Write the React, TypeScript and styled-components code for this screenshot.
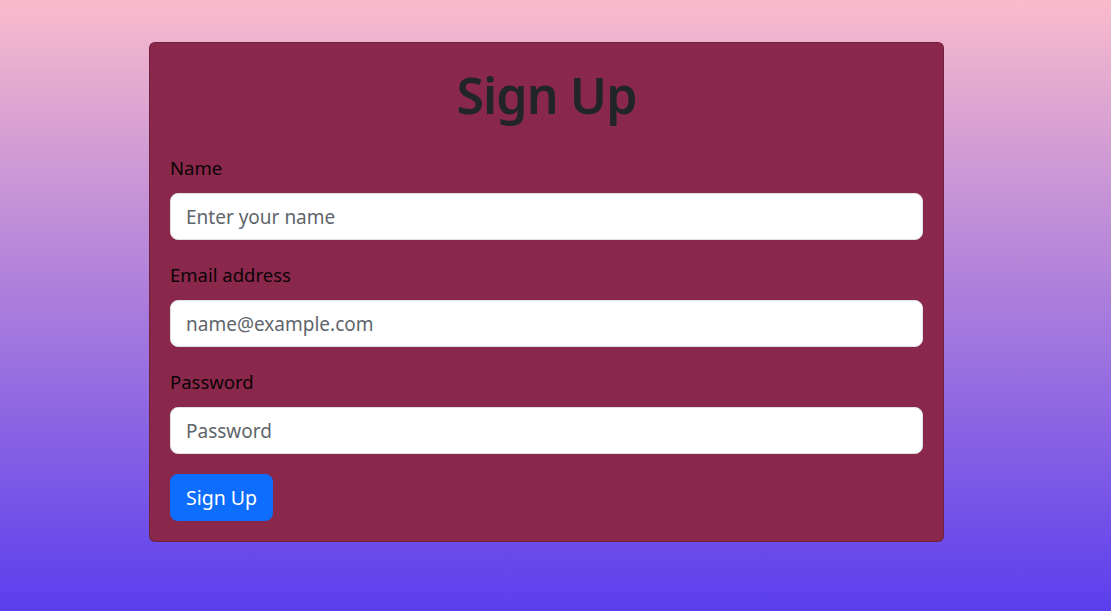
import React from "react";
import styled, { createGlobalStyle } from "styled-components";

const GlobalStyle = createGlobalStyle`
  html, body {
    margin: 0;
    padding: 0;
  }
  body {
    min-height: 611px;
    background: linear-gradient(to bottom, #f9bbcc 0%, #5a3eed 100%);
    font-family: "Noto Sans", "Open Sans", sans-serif;
  }
  * { box-sizing: border-box; }
`;

const Page = styled.div`
  min-height: 611px;
  padding: 42px 0 0 149px;
`;

const Card = styled.div`
  width: 795px;
  background: #8a284b;
  border: 1px solid rgba(0, 0, 0, 0.2);
  border-radius: 6px;
  padding: 20px;
  display: flex;
  flex-direction: column;
`;

const Title = styled.h1`
  margin: 0;
  height: 93px;
  text-align: center;
  font-size: 50px;
  font-weight: 600;
  line-height: 64px;
  color: #212529;
  letter-spacing: -0.9px;
`;

const Group = styled.div<{ $last?: boolean }>`
  display: flex;
  flex-direction: column;
  margin-bottom: ${(p) => (p.$last ? "20px" : "23px")};
`;

const Label = styled.label`
  display: block;
  font-size: 18.5px;
  line-height: 24px;
  color: #0b0306;
  margin-bottom: 13px;
`;

const Input = styled.input`
  height: 47px;
  width: 100%;
  border: 1px solid #dee2e6;
  border-radius: 8px;
  background: #fff;
  padding: 0 15px;
  font-family: inherit;
  font-size: 19px;
  color: #212529;
  outline: none;
  &::placeholder {
    color: #5f656b;
  }
`;

const Button = styled.button`
  align-self: flex-start;
  height: 47px;
  padding: 0 16px;
  border: none;
  border-radius: 8px;
  background: #0d6efd;
  color: #fff;
  font-family: inherit;
  font-size: 19.5px;
  cursor: pointer;
`;

export default function App() {
  return (
    <>
      <GlobalStyle />
      <Page>
        <Card>
          <Title>Sign Up</Title>
          <Group>
            <Label htmlFor="name">Name</Label>
            <Input id="name" type="text" placeholder="Enter your name" />
          </Group>
          <Group>
            <Label htmlFor="email">Email address</Label>
            <Input id="email" type="email" placeholder="name@example.com" />
          </Group>
          <Group $last>
            <Label htmlFor="password">Password</Label>
            <Input id="password" type="password" placeholder="Password" />
          </Group>
          <Button type="button">Sign Up</Button>
        </Card>
      </Page>
    </>
  );
}
